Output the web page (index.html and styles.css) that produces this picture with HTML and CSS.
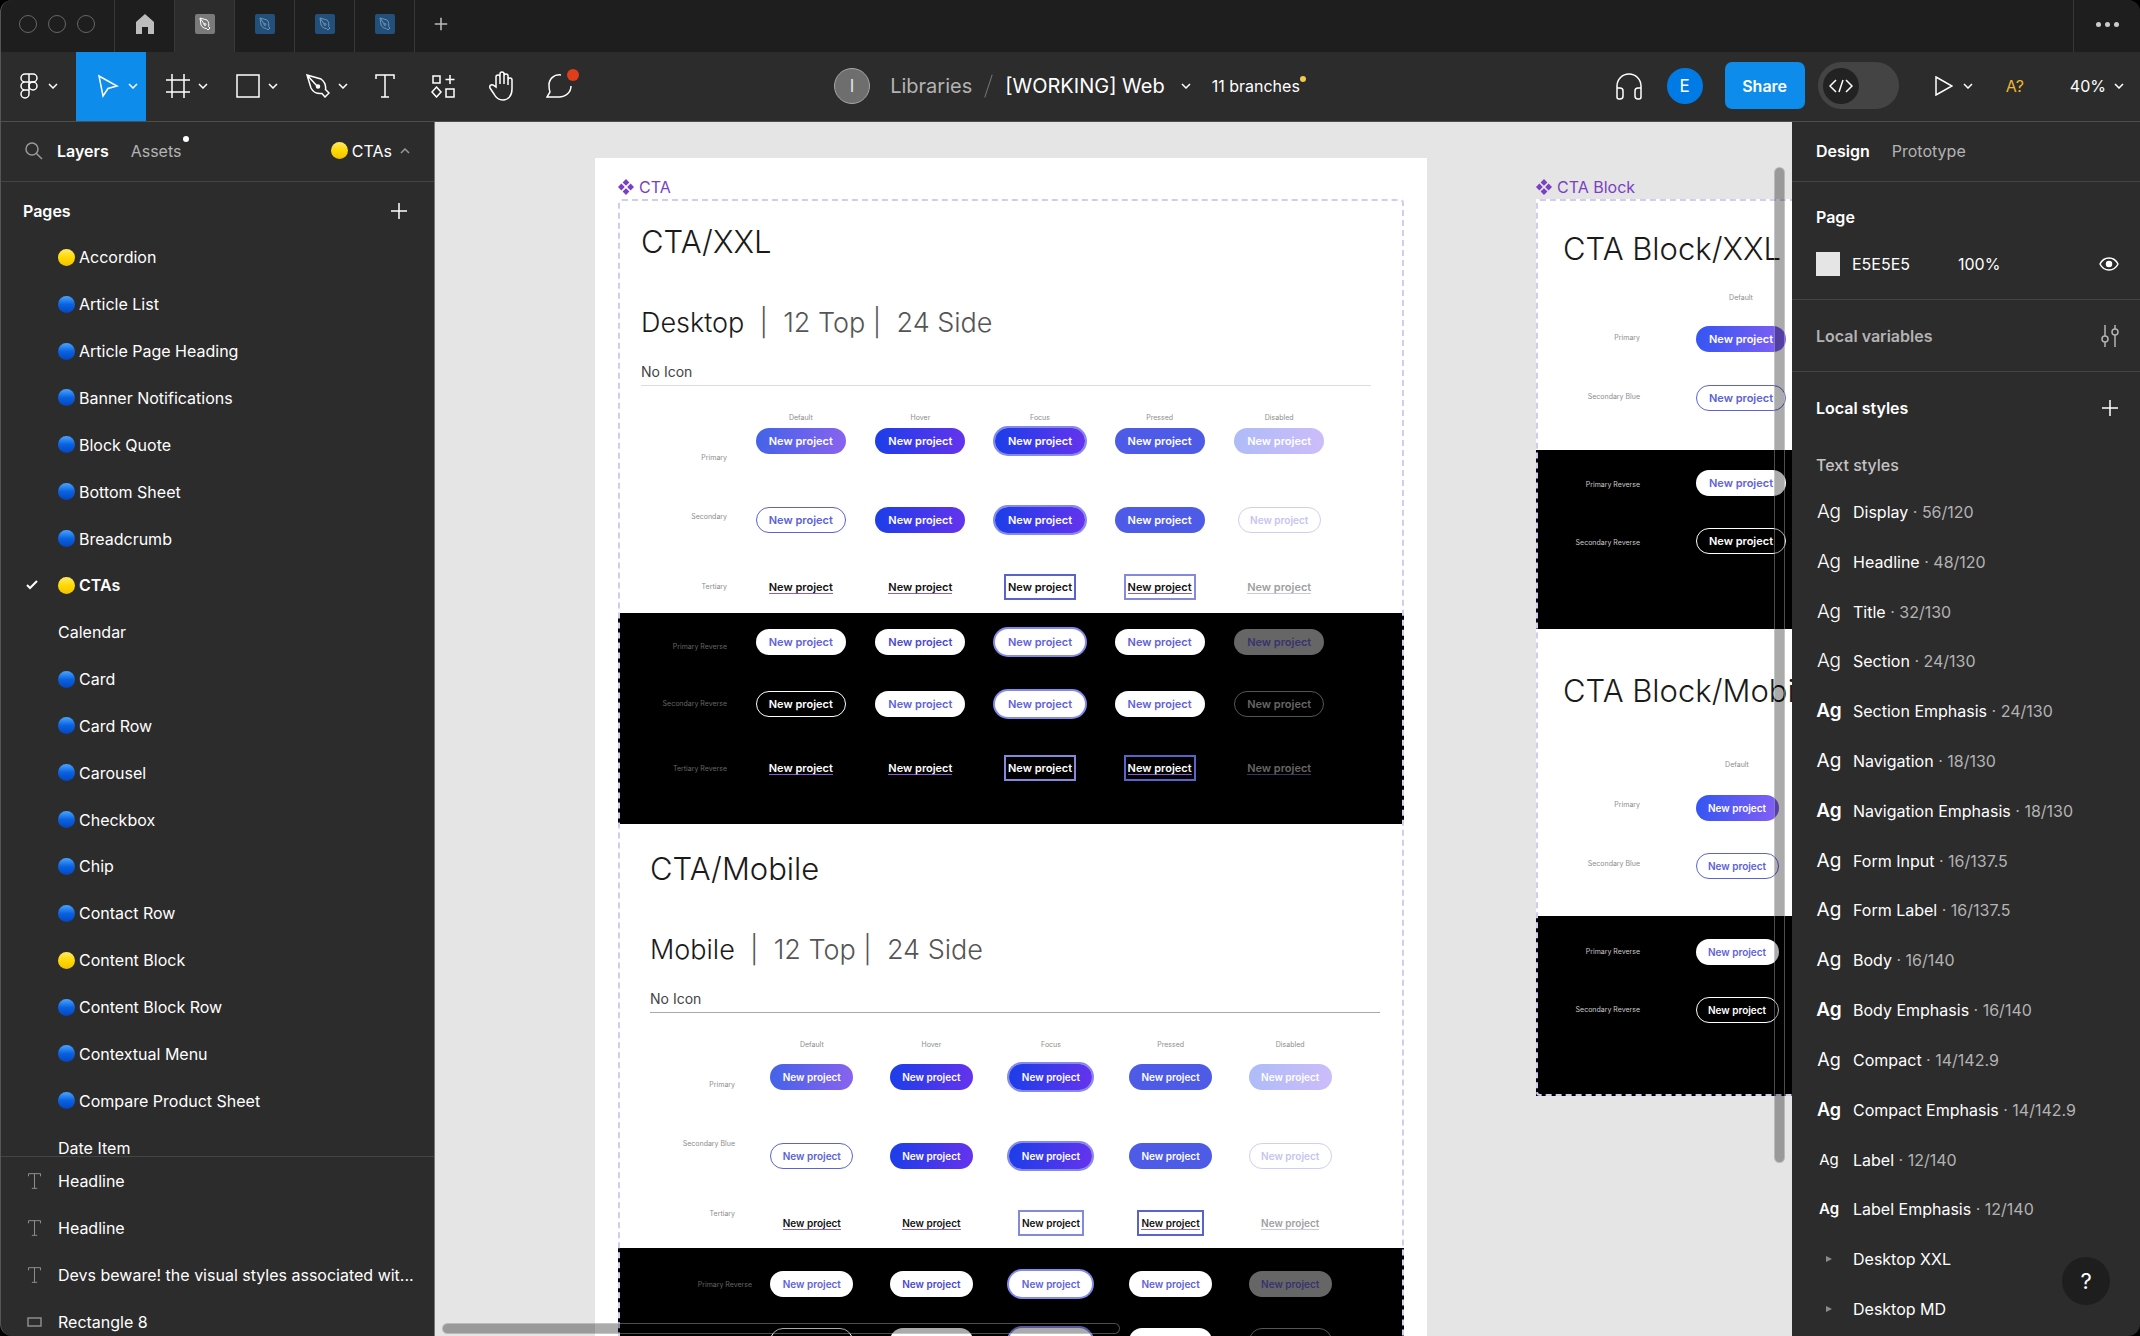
FILE: index.html
```html
<!DOCTYPE html>
<html lang="en">
  <head>
    <meta charset="UTF-8" />
    <meta name="viewport" content="width=device-width, initial-scale=1.0" />
    <title>[WORKING] Web</title>
    <link rel="stylesheet" href="styles.css">
  </head>
  <body>
    <!-- shared icons -->
    <svg class="sprite" aria-hidden="true">
      <symbol id="chevron" viewBox="0 0 10 6"><path d="M1 1l4 4 4-4" /></symbol>
      <symbol id="plus" viewBox="0 0 18 18"><path d="M9 1v16M1 9h16" /></symbol>
      <symbol id="file" viewBox="0 0 20 20">
        <rect width="20" height="20" rx="2" stroke="none" fill="currentColor" />
        <path d="M5 4l7 2c2 2 2 5 1.500 6.500L15 14l-2 2-1.500-1.500C9 14.500 7 13 6 11zM5 4l4.500 6.500" />
        <circle cx="10" cy="10.500" r="1" />
      </symbol>
      <symbol id="text" viewBox="0 0 20 24"><path d="M1 5V1h18v4M10 1v22M6 23h8" /></symbol>
      <symbol id="component" viewBox="0 0 16 16">
        <path d="M8 0l3.400 3.400L8 6.800 4.600 3.400zM8 9.200l3.400 3.400L8 16l-3.400-3.400zM3.400 4.600L6.800 8l-3.400 3.400L0 8zM12.600 4.600L16 8l-3.400 3.400L9.200 8z" />
      </symbol>
    </svg>

    <div class="window">
      <header class="titlebar">
        <div class="lights"><i></i><i></i><i></i></div>
        <button class="tab" aria-label="Home">
          <svg class="home" width="20" height="22" viewBox="0 0 20 22"><path d="M10 1l9 8v12h-6v-7H7v7H1V9z" /></svg>
        </button>
        <button class="tab active" aria-label="Web"><svg class="file"><use href="#file" /></svg></button>
        <button class="tab" aria-label="File 2"><svg class="file"><use href="#file" /></svg></button>
        <button class="tab" aria-label="File 3"><svg class="file"><use href="#file" /></svg></button>
        <button class="tab" aria-label="File 4"><svg class="file"><use href="#file" /></svg></button>
        <button class="new-tab" aria-label="New tab"><svg class="plus"><use href="#plus" /></svg></button>
        <button class="more" aria-label="More"><i></i><i></i><i></i></button>
      </header>

      <div class="toolbar">
        <nav class="tools">
          <button class="tool menu" aria-label="Main menu">
            <svg width="18" height="26" viewBox="0 0 18 26"><path d="M9 1H5a4 4 0 000 8h8a4 4 0 000-8zM9 1v20a4 4 0 11-4-4h4M5 9a4 4 0 000 8" /><circle cx="13" cy="13" r="4" /></svg>
            <svg class="chevron"><use href="#chevron" /></svg>
          </button>
          <button class="tool active" aria-label="Move">
            <svg width="24" height="24" viewBox="0 0 24 24"><path d="M3 2l18 10-9 2.500L7 22z" /></svg>
            <svg class="chevron"><use href="#chevron" /></svg>
          </button>
          <button class="tool" aria-label="Frame">
            <svg width="24" height="24" viewBox="0 0 24 24"><path d="M6 0v24M18 0v24M0 6h24M0 18h24" /></svg>
            <svg class="chevron"><use href="#chevron" /></svg>
          </button>
          <button class="tool" aria-label="Rectangle">
            <svg width="24" height="24" viewBox="0 0 24 24"><path d="M1 1h22v22H1z" /></svg>
            <svg class="chevron"><use href="#chevron" /></svg>
          </button>
          <button class="tool" aria-label="Pen">
            <svg width="24" height="24" viewBox="0 0 24 24"><path d="M1 1l14 4c4 3 5 7 4.500 10.500L23 19l-4 4-3-3.500C11 20 7 18 5 14zM1 1l10 11" /><circle cx="12" cy="12.500" r="1.500" fill="#fff" /></svg>
            <svg class="chevron"><use href="#chevron" /></svg>
          </button>
          <button class="tool single" aria-label="Text"><svg width="20" height="24"><use href="#text" /></svg></button>
          <button class="tool single" aria-label="Resources">
            <svg width="24" height="24" viewBox="0 0 24 24"><path d="M2 2h7v7H2zM15 15h8v8h-8zM19 1v9M14.500 5.500h9M5.500 13l4.500 5-4.500 5L1 18z" /></svg>
          </button>
          <button class="tool single" aria-label="Hand">
            <svg width="26" height="30" viewBox="0 0 26 30"><path d="M8 16V6a2 2 0 014 0v7V3a2 2 0 014 0v10V5a2 2 0 014 0v9V9a2 2 0 014 0v9c0 7-4 11-9 11-4 0-7-2-9-6l-4-6c-1-2 1-4 3-3z" /></svg>
          </button>
          <button class="tool single comment" aria-label="Comment">
            <svg width="26" height="26" viewBox="0 0 26 26"><path d="M15 2C8 1 3 6 3 12c0 3 0 5 1 7l-3 5h12c7 0 12-5 12-11" /></svg>
            <i class="dot"></i>
          </button>
        </nav>

        <div class="file-title">
          <span class="avatar">I</span>
          <a href="#" class="folder">Libraries</a>
          <span class="slash"></span>
          <h1>[WORKING] Web</h1>
          <svg class="chevron"><use href="#chevron" /></svg>
          <a href="#" class="branches">11 branches<i></i></a>
        </div>

        <div class="actions">
          <button class="plain" aria-label="Audio">
            <svg width="28" height="28" viewBox="0 0 28 28"><path d="M2 25V14a12 12 0 0124 0v11M2 16h3a3 3 0 013 3v5a3 3 0 01-3 3H4a2 2 0 01-2-2zM26 16h-3a3 3 0 00-3 3v5a3 3 0 003 3h1a2 2 0 002-2z" /></svg>
          </button>
          <span class="avatar me">E</span>
          <button class="share">Share</button>
          <button class="dev-mode" aria-label="Dev mode">
            <span><svg width="24" height="14" viewBox="0 0 24 14"><path d="M7 1L1 7l6 6M17 1l6 6-6 6M14 1l-4 12" /></svg></span>
          </button>
          <button class="plain play" aria-label="Present">
            <svg width="18" height="20" viewBox="0 0 18 20"><path d="M1 1l16 9-16 9z" /></svg>
            <svg class="chevron"><use href="#chevron" /></svg>
          </button>
          <button class="plain fonts">A?</button>
          <button class="plain zoom">40% <svg class="chevron"><use href="#chevron" /></svg></button>
        </div>
      </div>

      <main class="workspace">
        <aside class="left-panel">
          <div class="panel-tabs">
            <svg class="search" width="18" height="18" viewBox="0 0 18 18"><circle cx="7" cy="7" r="6" /><path d="M11 11l6 6" /></svg>
            <button class="panel-tab active">Layers</button>
            <button class="panel-tab assets">Assets<i></i></button>
            <button class="current-page"><i class="ball yellow"></i>CTAs<svg class="chevron up"><use href="#chevron" /></svg></button>
          </div>
          <div class="pages-head">
            <h2>Pages</h2>
            <button class="plain" aria-label="Add page"><svg class="plus"><use href="#plus" /></svg></button>
          </div>
          <div class="pages">
            <ul class="page-list">
              <li><i class="ball yellow"></i>Accordion</li>
              <li><i class="ball"></i>Article List</li>
              <li><i class="ball"></i>Article Page Heading</li>
              <li><i class="ball"></i>Banner Notifications</li>
              <li><i class="ball"></i>Block Quote</li>
              <li><i class="ball"></i>Bottom Sheet</li>
              <li><i class="ball"></i>Breadcrumb</li>
              <li class="selected"><svg class="check" width="12" height="10" viewBox="0 0 12 10"><path d="M1 5l3 3 7-7" /></svg><i class="ball yellow"></i>CTAs</li>
              <li>Calendar</li>
              <li><i class="ball"></i>Card</li>
              <li><i class="ball"></i>Card Row</li>
              <li><i class="ball"></i>Carousel</li>
              <li><i class="ball"></i>Checkbox</li>
              <li><i class="ball"></i>Chip</li>
              <li><i class="ball"></i>Contact Row</li>
              <li><i class="ball yellow"></i>Content Block</li>
              <li><i class="ball"></i>Content Block Row</li>
              <li><i class="ball"></i>Contextual Menu</li>
              <li><i class="ball"></i>Compare Product Sheet</li>
              <li>Date Item</li>
            </ul>
          </div>
          <ul class="layer-list">
            <li><svg width="15" height="16"><use href="#text" /></svg><span>Headline</span></li>
            <li><svg width="15" height="16"><use href="#text" /></svg><span>Headline</span></li>
            <li><svg width="15" height="16"><use href="#text" /></svg><span>Devs beware! the visual styles associated wit...</span></li>
            <li><svg width="15" height="10" viewBox="0 0 15 10"><path d="M1 1h13v8H1z" /></svg><span>Rectangle 8</span></li>
          </ul>
        </aside>

        <section class="canvas">
          <div class="artboard">
            <p class="node-name"><svg><use href="#component" /></svg>CTA</p>
            <div class="component-set">
              <div class="sheet xxl">
                <h2>CTA/XXL</h2>
                <h3>Desktop<span>  |  12 Top |  24 Side</span></h3>
                <h4>No Icon</h4>
                <div class="matrix">
                  <div class="labels"><p>Primary</p><p>Secondary</p><p>Tertiary</p></div>
                  <div class="variants">
                    <p>Default</p><p>Hover</p><p>Focus</p><p>Pressed</p><p>Disabled</p>
                    <button class="cta">New project</button>
                    <button class="cta hover">New project</button>
                    <button class="cta hover focus">New project</button>
                    <button class="cta pressed">New project</button>
                    <button class="cta disabled">New project</button>
                    <button class="cta outline">New project</button>
                    <button class="cta hover">New project</button>
                    <button class="cta hover focus">New project</button>
                    <button class="cta pressed">New project</button>
                    <button class="cta outline faded small">New project</button>
                    <button class="cta link"><u>New project</u></button>
                    <button class="cta link"><u>New project</u></button>
                    <button class="cta link boxed">New project</button>
                    <button class="cta link boxed soft"><u>New project</u></button>
                    <button class="cta link dim"><u>New project</u></button>
                  </div>
                </div>
              </div>
              <div class="sheet xxl reverse">
                <div class="matrix">
                  <div class="labels"><p>Primary Reverse</p><p>Secondary Reverse</p><p>Tertiary Reverse</p></div>
                  <div class="variants">
                    <button class="cta white">New project</button>
                    <button class="cta white deep">New project</button>
                    <button class="cta white focus">New project</button>
                    <button class="cta white">New project</button>
                    <button class="cta white off">New project</button>
                    <button class="cta ghost">New project</button>
                    <button class="cta white">New project</button>
                    <button class="cta white focus">New project</button>
                    <button class="cta white">New project</button>
                    <button class="cta ghost off">New project</button>
                    <button class="cta link"><u>New project</u></button>
                    <button class="cta link"><u>New project</u></button>
                    <button class="cta link boxed soft">New project</button>
                    <button class="cta link boxed"><u>New project</u></button>
                    <button class="cta link dim"><u>New project</u></button>
                  </div>
                </div>
              </div>
              <div class="sheet mobile">
                <h2>CTA/Mobile</h2>
                <h3>Mobile<span>  |  12 Top |  24 Side</span></h3>
                <h4>No Icon</h4>
                <div class="matrix">
                  <div class="labels"><p>Primary</p><p>Secondary Blue</p><p>Tertiary</p></div>
                  <div class="variants">
                    <p>Default</p><p>Hover</p><p>Focus</p><p>Pressed</p><p>Disabled</p>
                    <button class="cta">New project</button>
                    <button class="cta hover">New project</button>
                    <button class="cta hover focus">New project</button>
                    <button class="cta pressed">New project</button>
                    <button class="cta disabled">New project</button>
                    <button class="cta outline">New project</button>
                    <button class="cta hover">New project</button>
                    <button class="cta hover focus">New project</button>
                    <button class="cta pressed">New project</button>
                    <button class="cta outline faded">New project</button>
                    <button class="cta link"><u>New project</u></button>
                    <button class="cta link"><u>New project</u></button>
                    <button class="cta link boxed soft">New project</button>
                    <button class="cta link boxed"><u>New project</u></button>
                    <button class="cta link dim"><u>New project</u></button>
                  </div>
                </div>
              </div>
              <div class="sheet mobile reverse">
                <div class="matrix">
                  <div class="labels"><p>Primary Reverse</p></div>
                  <div class="variants">
                    <button class="cta white">New project</button>
                    <button class="cta white deep">New project</button>
                    <button class="cta white focus">New project</button>
                    <button class="cta white">New project</button>
                    <button class="cta white off">New project</button>
                    <button class="cta ghost">New project</button>
                    <button class="cta white">New project</button>
                    <button class="cta white focus">New project</button>
                    <button class="cta white">New project</button>
                    <button class="cta ghost off">New project</button>
                  </div>
                </div>
              </div>
            </div>
          </div>

          <div class="block-node">
            <p class="node-name"><svg><use href="#component" /></svg>CTA Block</p>
            <div class="component-set">
              <div class="sheet block">
                <h2>CTA Block/XXL</h2>
                <div class="matrix">
                  <div class="labels"><p>Primary</p><p>Secondary Blue</p></div>
                  <div class="variants">
                    <p>Default</p>
                    <button class="cta bright">New project</button>
                    <button class="cta outline">New project</button>
                  </div>
                </div>
              </div>
              <div class="sheet block reverse">
                <div class="matrix">
                  <div class="labels"><p>Primary Reverse</p><p>Secondary Reverse</p></div>
                  <div class="variants">
                    <button class="cta white">New project</button>
                    <button class="cta ghost">New project</button>
                  </div>
                </div>
              </div>
              <div class="sheet block compact">
                <h2>CTA Block/Mobile</h2>
                <div class="matrix">
                  <div class="labels"><p>Primary</p><p>Secondary Blue</p></div>
                  <div class="variants">
                    <p>Default</p>
                    <button class="cta bright">New project</button>
                    <button class="cta outline">New project</button>
                  </div>
                </div>
              </div>
              <div class="sheet block compact reverse">
                <div class="matrix">
                  <div class="labels"><p>Primary Reverse</p><p>Secondary Reverse</p></div>
                  <div class="variants">
                    <button class="cta white">New project</button>
                    <button class="cta ghost">New project</button>
                  </div>
                </div>
              </div>
            </div>
          </div>

          <div class="scroll-y"></div>
          <div class="scroll-x"></div>
        </section>

        <aside class="right-panel">
          <div class="panel-tabs">
            <button class="panel-tab active">Design</button>
            <button class="panel-tab">Prototype</button>
          </div>
          <section class="page-props">
            <h2>Page</h2>
            <div class="fill">
              <i class="swatch"></i>
              <span class="hex">E5E5E5</span>
              <span>100%</span>
              <button class="plain" aria-label="Toggle visibility">
                <svg width="20" height="14" viewBox="0 0 20 14"><path d="M1 7c4-8 14-8 18 0-4 8-14 8-18 0z" /><circle cx="10" cy="7" r="2.500" fill="#fff" /></svg>
              </button>
            </div>
          </section>
          <section class="variables">
            <h2>Local variables</h2>
            <button class="plain" aria-label="Open variables">
              <svg width="18" height="22" viewBox="0 0 18 22"><path d="M4 0v11M4 17v5M14 0v4M14 10v12" /><circle cx="4" cy="14" r="3" /><circle cx="14" cy="7" r="3" /></svg>
            </button>
          </section>
          <section class="styles">
            <div class="styles-head">
              <h2>Local styles</h2>
              <button class="plain" aria-label="Add style"><svg class="plus"><use href="#plus" /></svg></button>
            </div>
            <h3>Text styles</h3>
            <ul class="style-list">
              <li><b class="light">Ag</b>Display<span> · 56/120</span></li>
              <li><b class="light">Ag</b>Headline<span> · 48/120</span></li>
              <li><b class="light">Ag</b>Title<span> · 32/130</span></li>
              <li><b class="light">Ag</b>Section<span> · 24/130</span></li>
              <li><b>Ag</b>Section Emphasis<span> · 24/130</span></li>
              <li><b class="regular">Ag</b>Navigation<span> · 18/130</span></li>
              <li><b>Ag</b>Navigation Emphasis<span> · 18/130</span></li>
              <li><b class="regular">Ag</b>Form Input<span> · 16/137.5</span></li>
              <li><b class="regular">Ag</b>Form Label<span> · 16/137.5</span></li>
              <li><b class="regular">Ag</b>Body<span> · 16/140</span></li>
              <li><b>Ag</b>Body Emphasis<span> · 16/140</span></li>
              <li><b class="regular medium">Ag</b>Compact<span> · 14/142.9</span></li>
              <li><b class="medium">Ag</b>Compact Emphasis<span> · 14/142.9</span></li>
              <li><b class="regular tiny">Ag</b>Label<span> · 12/140</span></li>
              <li><b class="tiny">Ag</b>Label Emphasis<span> · 12/140</span></li>
              <li><i class="arrow"></i>Desktop XXL</li>
              <li><i class="arrow"></i>Desktop MD</li>
            </ul>
          </section>
        </aside>
      </main>
      <button class="help">?</button>
    </div>
  </body>
</html>
```
FILE: styles.css
```css
:root {
  --panel: #2c2c2c;
  --line: #444;
  --muted: #b3b3b3;
  --blue: #0d8ceb;
  --indigo: #5b62d6;
}
* {
  box-sizing: border-box;
}
body {
  margin: 0;
  background-color: #000;
  color: #fff;
  font-family: "Inter", sans-serif;
  font-size: 16px;
  line-height: 20px;
}

h1, h2, h3, h4, p, ul {
  margin: 0;
  padding: 0;
  font-weight: 400;
}

ul {
  list-style: none;
}

a {
  color: inherit;
  text-decoration: none;
}

button {
  margin: 0;
  padding: 0;
  border: 0;
  background: none;
  color: inherit;
  font: inherit;
  cursor: pointer;
}

svg {
  display: block;
  flex: none;
  fill: none;
  stroke: #fff;
  stroke-width: 1.5;
}

.sprite {
  position: absolute;
  width: 0;
  height: 0;
}

.chevron {
  width: 10px;
  height: 6px;
}

.plus {
  width: 18px;
  height: 18px;
}

.plain {
  display: flex;
  align-items: center;
}

.window {
  position: relative;
  display: flex;
  flex-direction: column;
  height: 100vh;
  overflow: hidden;
  border-radius: 12px;
  background-color: var(--panel);
}

.window::after {
  content: "";
  position: absolute;
  inset: 0;
  border-left: 1px solid #555;
  border-radius: 12px;
  pointer-events: none;
}

/* title bar */
.titlebar {
  display: flex;
  flex: none;
  height: 52px;
  background-color: #1e1e1e;
}

.titlebar > * {
  display: flex;
  align-items: center;
  justify-content: center;
  height: 52px;
  padding-bottom: 4px;
}

.lights {
  width: 114px;
  gap: 11px;
}

.lights i {
  width: 18px;
  height: 18px;
  border: 1px solid #666;
  border-radius: 50%;
}

.tab {
  width: 60px;
  border-left: 1px solid #383838;
}

.tab.active {
  background-color: var(--panel);
}

.home {
  fill: #bdbdbd;
  stroke: none;
}

.file {
  width: 20px;
  height: 20px;
  color: #22507a;
  stroke: #6f93b5;
  stroke-width: 1;
}

.tab.active .file {
  color: #7a7a7a;
  stroke: #fff;
}

.new-tab {
  width: 52px;
  border-left: 1px solid #383838;
}

.new-tab .plus {
  width: 14px;
  height: 14px;
  stroke: #bbb;
  stroke-width: 2;
}

.more {
  width: 67px;
  margin-left: auto;
  gap: 4px;
  border-left: 1px solid #383838;
}

.more i {
  width: 5px;
  height: 5px;
  border-radius: 50%;
  background-color: #ccc;
}

/* toolbar */
.toolbar {
  display: grid;
  grid-template-columns: 1fr auto 1fr;
  flex: none;
  height: 70px;
  border-bottom: 1px solid #4d4d4d;
}

.tools {
  display: flex;
}

.tool {
  display: flex;
  align-items: center;
  gap: 8px;
  width: 70px;
  padding: 0 0 2px 20px;
}

.tool.menu {
  gap: 10px;
  width: 76px;
}

.tool.active {
  background-color: var(--blue);
}

.tool.single {
  justify-content: center;
  width: 58px;
  padding-left: 0;
}

.comment {
  position: relative;
}

.comment .dot {
  position: absolute;
  top: 17px;
  right: 9px;
  width: 12px;
  height: 12px;
  border-radius: 50%;
  background-color: #e03e1a;
}

.file-title {
  display: flex;
  align-items: center;
  padding-bottom: 2px;
  font-size: 20px;
}

.file-title h1 {
  margin-right: 16px;
  font-size: 20px;
}

.avatar {
  width: 36px;
  height: 36px;
  border: 1px solid #a5a5a5;
  border-radius: 50%;
  background-color: #6e6e6e;
  color: #e5e5e5;
  font-size: 17px;
  line-height: 34px;
  text-align: center;
}

.avatar.me {
  margin: 0 22px 0 24px;
  border: 0;
  background-color: #007be5;
  color: #fff;
  line-height: 36px;
}

.folder {
  margin-left: 20px;
  color: var(--muted);
}

.slash {
  width: 1px;
  height: 24px;
  margin: 0 16px;
  background-color: #777;
  transform: rotate(18deg);
}

.branches {
  position: relative;
  margin: 0 6px 0 21px;
  font-size: 16px;
}

.branches i {
  position: absolute;
  top: 0;
  right: -6px;
  width: 6px;
  height: 6px;
  border-radius: 50%;
  background-color: #f2c94c;
}

.actions {
  display: flex;
  align-items: center;
  justify-content: flex-end;
  padding: 0 16px 2px 0;
}

.share {
  width: 80px;
  height: 47px;
  margin-right: 13px;
  border-radius: 7px;
  background-color: var(--blue);
  font-weight: 600;
}

.dev-mode {
  display: flex;
  align-items: center;
  width: 81px;
  height: 47px;
  padding: 0 5px;
  border-radius: 24px;
  background-color: #444;
}

.dev-mode span {
  display: flex;
  align-items: center;
  justify-content: center;
  width: 36px;
  height: 36px;
  border-radius: 50%;
  background-color: #222;
}

.play {
  gap: 10px;
  margin-left: 36px;
}

.fonts {
  margin: 0 46px 0 33px;
  color: #f0b72b;
}

.zoom {
  gap: 8px;
}

/* panels */
.workspace {
  display: grid;
  grid-template-columns: 435px 1fr 348px;
  flex: 1;
  min-height: 0;
}

.left-panel {
  display: flex;
  flex-direction: column;
  min-height: 0;
  border-right: 1px solid #777;
}

.panel-tabs {
  display: flex;
  align-items: center;
  flex: none;
  height: 60px;
  padding: 0 24px 2px;
  border-bottom: 1px solid var(--line);
}

.panel-tab {
  margin-right: 24px;
  color: var(--muted);
}

.panel-tab.active {
  margin-right: 22px;
  color: #fff;
  font-weight: 600;
}

.search {
  margin: 0 14px 0 1px;
  stroke: #999;
}

.assets {
  position: relative;
}

.assets i {
  position: absolute;
  top: -5px;
  right: -8px;
  width: 6px;
  height: 6px;
  border-radius: 50%;
  background-color: #fff;
}

.current-page {
  display: flex;
  align-items: center;
  margin-left: auto;
}

.up {
  margin-left: 8px;
  stroke: #999;
  transform: rotate(180deg);
}

.ball {
  flex: none;
  width: 17px;
  height: 17px;
  margin-right: 4px;
  border-radius: 50%;
  background: linear-gradient(#4aa5ff, #0a62e0 50%, #0546c0);
}

.ball.yellow {
  background: linear-gradient(#ffe96b, #ffd900 50%, #f2c200);
}

.pages-head {
  display: flex;
  align-items: center;
  justify-content: space-between;
  flex: none;
  height: 52px;
  padding: 5px 26px 0 23px;
}

.pages-head h2,
.right-panel h2 {
  font-size: 16px;
  font-weight: 600;
}

.pages {
  flex: 1;
  min-height: 0;
  overflow: hidden;
  border-bottom: 1px solid var(--line);
}

.page-list {
  display: grid;
  grid-auto-rows: 1fr;
  height: 937px;
}

.page-list li {
  position: relative;
  display: flex;
  align-items: center;
  padding-left: 58px;
}

.page-list .selected {
  font-weight: 600;
}

.check {
  position: absolute;
  left: 26px;
  stroke-width: 2;
}

.layer-list {
  flex: none;
  height: 179px;
}

.layer-list li {
  display: flex;
  align-items: center;
  gap: 16px;
  height: 47px;
  padding: 0 0 0 27px;
}

.layer-list svg {
  stroke: #8c8c8c;
}

.layer-list span {
  white-space: nowrap;
}

.right-panel {
  min-height: 0;
  overflow: hidden;
}

.right-panel section {
  padding: 0 21px 0 24px;
  border-bottom: 1px solid var(--line);
}

.right-panel .styles {
  border: 0;
}

.page-props {
  height: 118px;
}

.page-props h2 {
  padding: 25px 0 24px;
}

.fill {
  display: flex;
  align-items: center;
  height: 26px;
}

.fill .plain {
  margin-left: auto;
}

.swatch {
  width: 24px;
  height: 24px;
  margin-right: 12px;
  background-color: #e5e5e5;
}

.hex {
  width: 106px;
}

.variables,
.styles-head {
  display: flex;
  align-items: center;
  justify-content: space-between;
  height: 72px;
}

.right-panel .variables h2 {
  color: var(--muted);
}

.variables svg {
  stroke: var(--muted);
}

.styles h3 {
  padding: 11px 0 12px;
  color: #c4c4c4;
  font-size: 16px;
  font-weight: 500;
}

.style-list {
  display: grid;
  grid-auto-rows: 1fr;
  height: 847px;
}

.style-list li {
  display: flex;
  align-items: center;
  white-space: pre;
}

.style-list span {
  color: var(--muted);
}

.style-list b {
  width: 26px;
  margin-right: 11px;
  font-size: 19px;
  font-weight: 600;
  text-align: center;
}

.style-list .light {
  font-weight: 300;
}

.style-list .regular {
  font-weight: 400;
}

.style-list .medium {
  font-size: 18px;
}

.style-list .tiny {
  font-size: 15px;
}

.arrow {
  margin: 0 21px 0 10px;
  border: 3px solid transparent;
  border-left: 6px solid #8c8c8c;
  border-right: 0;
}

.help {
  position: absolute;
  right: 30px;
  bottom: 31px;
  width: 48px;
  height: 48px;
  border-radius: 50%;
  background-color: #1e1e1e;
  font-size: 22px;
}

/* canvas */
.canvas {
  position: relative;
  overflow: hidden;
  background-color: #e5e5e5;
  color: #1a1a1a;
}

.artboard {
  position: absolute;
  top: 36px;
  left: 160px;
  width: 832px;
  padding: 19px 23px;
  background-color: #fff;
}

.block-node {
  position: absolute;
  top: 55px;
  left: 1101px;
  width: 784px;
}

.node-name {
  display: flex;
  align-items: center;
  gap: 5px;
  height: 22px;
  padding-bottom: 2px;
  color: #7b3fc4;
}

.node-name svg {
  width: 16px;
  height: 16px;
  fill: #7b3fc4;
  stroke: none;
}

.component-set {
  position: relative;
  background-color: #fff;
}

/* the dashed outline lies over the sheets */
.component-set::after {
  content: "";
  position: absolute;
  inset: 0;
  border: 2px dashed #d3ccf0;
  border-radius: 4px;
  pointer-events: none;
}

.sheet {
  position: relative;
  padding-left: 23px;
}

.sheet h2 {
  font-size: 31px;
  font-weight: 300;
  line-height: 40px;
  white-space: nowrap;
}

.sheet h3 {
  margin-top: 43px;
  font-size: 27px;
  font-weight: 300;
  line-height: 36px;
  white-space: pre;
}

.sheet h3 span {
  color: #555;
}

.sheet h4 {
  margin: 21px 33px 0 0;
  padding-bottom: 3px;
  border-bottom: 1px solid #ddd;
  color: #444;
  font-size: 14px;
}

.matrix {
  display: flex;
  gap: 14px;
}

.labels {
  display: grid;
  align-content: start;
  width: 86px;
  color: #8c8c8c;
  font-size: 7px;
  line-height: 12px;
  text-align: right;
  white-space: nowrap;
}

.variants {
  display: grid;
  grid-template-columns: repeat(5, 1fr);
  align-content: start;
  justify-items: center;
  width: 598px;
}

.variants p {
  color: #8c8c8c;
  font-size: 7px;
  line-height: 12px;
}

.xxl {
  height: 414px;
  padding-top: 23px;
}

.xxl .labels,
.mobile .labels {
  grid-template-rows: 59px 70px 12px;
  padding-top: 66px;
}

.xxl .variants {
  grid-template-rows: 16px 79px 67px 26px;
  padding-top: 26px;
}

.reverse {
  background-color: #000;
  color: #fff;
}

.reverse .labels {
  color: #666;
}

.xxl.reverse {
  height: 211px;
  padding-top: 0;
}

.xxl.reverse .labels {
  grid-template-rows: 57px 65px 12px;
  padding-top: 28px;
}

.xxl.reverse .variants {
  grid-template-rows: 62px 64px 26px;
  padding-top: 16px;
}

.mobile {
  height: 424px;
  padding: 25px 0 0 32px;
}

.mobile h4 {
  margin-right: 24px;
  border-color: #aaa;
}

.mobile .labels {
  width: 85px;
}

.mobile .matrix {
  gap: 17px;
}

.mobile .variants {
  grid-template-rows: 25px 79px 67px 26px;
  padding-top: 26px;
}

.mobile.reverse {
  height: 211px;
  padding-top: 0;
}

.mobile.reverse .matrix {
  gap: 0;
}

.mobile.reverse .labels {
  width: 102px;
  padding-top: 31px;
}

.mobile.reverse .variants {
  grid-template-rows: 57px 26px;
  padding-top: 23px;
}

.block {
  height: 251px;
  padding: 30px 0 0 27px;
}

.block .matrix {
  gap: 41px;
}

.block .labels {
  grid-template-rows: 59px 12px;
  width: 77px;
  padding-top: 63px;
}

.block .variants {
  grid-template-columns: 1fr;
  grid-template-rows: 34px 59px 26px;
  width: 120px;
  padding-top: 23px;
}

.block.reverse {
  height: 179px;
  padding-top: 0;
}

.block.reverse .labels {
  grid-template-rows: 58px 12px;
  padding-top: 29px;
  color: #ccc;
}

.block.reverse .variants {
  grid-template-rows: 58px 26px;
  padding-top: 20px;
}

.block.compact {
  height: 287px;
  padding-top: 42px;
}

.block.compact .matrix {
  gap: 37px;
}

.block.compact .labels {
  padding-top: 88px;
}

.block.compact .variants {
  grid-template-rows: 36px 58px 26px;
  padding-top: 48px;
}

.block.compact.reverse {
  height: 180px;
  padding-top: 0;
}

.block.compact.reverse .labels {
  padding-top: 30px;
}

.block.compact.reverse .variants {
  grid-template-rows: 58px 26px;
  padding-top: 23px;
}

/* the drawn buttons */
.cta {
  width: 90px;
  height: 26px;
  border-radius: 13px;
  background: linear-gradient(100deg, #4263e8, #8a63ef);
  color: #fff;
  font-size: 11px;
  font-weight: 600;
  line-height: 22px;
  white-space: nowrap;
}

.mobile .cta,
.compact .cta,
.cta.small {
  width: 83px;
  font-size: 10px;
}

.cta.bright {
  background: linear-gradient(100deg, #3355f2, #8560f5);
}

.cta.hover {
  background: linear-gradient(100deg, #1a3ee8, #6633ee);
}

.cta.focus {
  box-shadow: 0 0 0 2px #8489ee;
}

.cta.pressed {
  background: #4d5be6;
}

.cta.disabled {
  background: linear-gradient(100deg, #adbcf8, #cdbcfa);
}

.cta.outline {
  border: 1px solid var(--indigo);
  background: #fff;
  color: var(--indigo);
}

.cta.outline.faded {
  border-color: #d0cff0;
  color: #c6c4f0;
}

.cta.white {
  background: #fff;
  color: #5f62da;
}

.cta.white.deep {
  color: #4a48d0;
}

.cta.white.off {
  background: #666;
  color: #37336e;
}

.cta.ghost {
  border: 1px solid #fff;
  background: #000;
}

.cta.ghost.off {
  border-color: #555;
  color: #666;
}

.cta.link,
.mobile .cta.link {
  width: auto;
  border-radius: 0;
  background: none;
  color: #111;
}

.cta.link u {
  display: block;
  border-bottom: 1px solid #8a5cd0;
  line-height: 12px;
  text-decoration: none;
}

.reverse .cta.link {
  color: #fff;
}

.cta.link.boxed {
  padding: 0 2px;
  border: 2px solid #5a62cc;
}

.cta.link.boxed.soft {
  border-color: #8489dc;
}

.cta.link.dim,
.mobile .cta.link.dim {
  color: #a0a0a0;
}

.cta.link.dim u {
  border-color: #cfc4ea;
}

.reverse .cta.link.dim {
  color: #666;
}

.reverse .cta.link.dim u {
  border-color: #3d3358;
}

/* scroll bars over the canvas */
.scroll-y,
.scroll-x {
  position: absolute;
  border: 1px solid rgba(255, 255, 255, 0.3);
  border-radius: 6px;
  background-color: rgba(0, 0, 0, 0.33);
}

.scroll-y {
  top: 45px;
  right: 7px;
  bottom: 173px;
  width: 11px;
}

.scroll-x {
  left: 7px;
  right: 672px;
  bottom: 2px;
  height: 11px;
}
```
